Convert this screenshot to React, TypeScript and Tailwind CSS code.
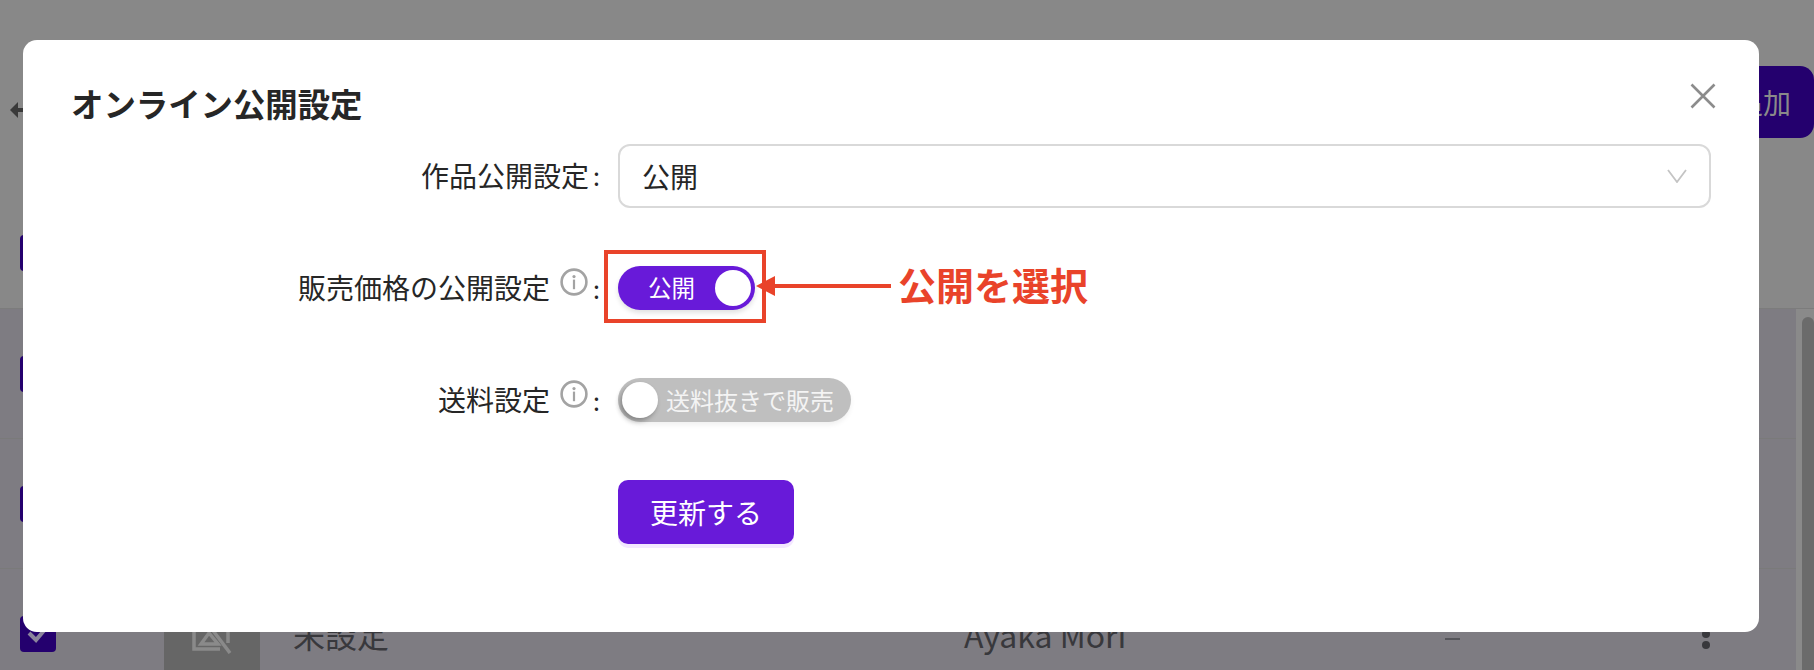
import React from "react";

const jp = "font-['Noto_Sans_CJK_JP','Noto_Sans',sans-serif]";

function InfoIcon() {
  return (
    <svg width="28" height="28" viewBox="0 0 28 28" fill="none" className="shrink-0">
      <circle cx="14" cy="14" r="12.4" stroke="#a3a3a3" strokeWidth="2.6" />
      <circle cx="14" cy="8.6" r="1.6" fill="#a3a3a3" />
      <rect x="12.9" y="11.6" width="2.2" height="9.6" fill="#a3a3a3" />
    </svg>
  );
}

function Label({ text, info }: { text: string; info?: boolean }) {
  return (
    <div className="flex w-[575px] shrink-0 items-center justify-end">
      <span className="-mt-[2px] text-[28px] leading-[36px] text-[#262626]">{text}</span>
      {info && (
        <span className="ml-[10px] mr-[1px] -mt-[12px]">
          <InfoIcon />
        </span>
      )}
      <span className="-mt-[1px] ml-[4px] w-[5px] text-[25px] leading-[36px] text-[#262626]">:</span>
    </div>
  );
}

function Checkbox({ checked }: { checked?: boolean }) {
  return (
    <div className="ml-[20px] flex h-[36px] w-[36px] shrink-0 items-center justify-center rounded-[4px] bg-[#24006e]">
      {checked && (
        <svg width="24" height="20" viewBox="0 0 24 20" fill="none">
          <path d="M3 9l7 7L21 3" stroke="#8b849c" strokeWidth="4" />
        </svg>
      )}
    </div>
  );
}

export default function App() {
  return (
    <div className={`relative h-[670px] w-[1814px] overflow-hidden bg-[#888888] ${jp}`}>
      {/* page beneath the overlay */}
      <div className="h-[309px] border-b border-[#7c7c7c] pt-[66px]">
        <div className="flex h-[72px] items-center justify-between">
          <svg width="24" height="20" viewBox="0 0 24 20" className="ml-[10px] mt-[12px] translate-y-[3px]" fill="none">
            <path d="M0 9l8-8v6h14v4H8v6z" fill="#3a3a3a" />
          </svg>
          <div className="flex h-[72px] w-[200px] items-center justify-end rounded-[14px] bg-[#24006e] pr-[23px] text-[28px] text-[#8a8a8a]">
            追加
          </div>
        </div>
        <div className="mt-[97px]">
          <Checkbox />
        </div>
      </div>
      <div className="flex">
        <div className="flex-1 bg-[#7e7c82]">
          <div className="flex h-[130px] items-center border-b border-[#7a7a7a]">
            <Checkbox />
          </div>
          <div className="flex h-[130px] items-center border-b border-[#7a7a7a]">
            <Checkbox />
          </div>
          <div className="flex h-[130px] items-center text-[#38383c]">
            <Checkbox checked />
            <div className="ml-[108px] flex h-[96px] w-[96px] items-center justify-center bg-[#666666]">
              <svg width="40" height="40" viewBox="0 0 40 40" fill="none" stroke="#8a8a8a" strokeWidth="3.5">
                <path d="M2 2v33h26M36 2v27" />
                <path d="M10 2l28 37" />
                <path d="M9 30l8-11 9 11z" />
              </svg>
            </div>
            <div className="ml-[33px] w-[671px] text-[32px]">未設定</div>
            <div className="w-[481px] text-[32px]">Ayaka Mori</div>
            <div className="mt-[10px] h-[2px] w-[15px] bg-[#55555a]" />
            <div className="ml-[242px] flex flex-col gap-[3px]">
              <span className="h-[8px] w-[8px] rounded-full bg-[#38383c]" />
              <span className="h-[8px] w-[8px] rounded-full bg-[#38383c]" />
              <span className="h-[8px] w-[8px] rounded-full bg-[#38383c]" />
            </div>
          </div>
        </div>
        <div className="w-[18px] bg-[#8a8a8a] pl-[6px] pt-[8px]">
          <div className="h-[400px] w-[12px] rounded-t-[6px] bg-[#6b6b6b]" />
        </div>
      </div>

      {/* modal */}
      <div className="absolute left-[23px] top-[40px] h-[592px] w-[1736px] rounded-[14px] bg-white pt-[41px]">
        <h2 className="pl-[48px] text-[32.4px] font-bold leading-[44px] text-[#262626]">オンライン公開設定</h2>

        <svg width="26" height="26" viewBox="0 0 26 26" className="absolute left-[1667px] top-[43px]" fill="none">
          <path d="M1.5 1.5l23 23M24.5 1.5l-23 23" stroke="#8c8c8c" strokeWidth="2.6" />
        </svg>

        <div className="mt-[19px] flex flex-col">
          <div className="flex h-[63px] items-center gap-[20px]">
            <Label text="作品公開設定" />
            <div className="flex h-[64px] w-[1093px] items-center justify-between rounded-[12px] border-2 border-[#d9d9d9] pl-[22px] pr-[22px] text-[28px] text-[#262626]">
              <span>公開</span>
              <svg width="20" height="14" viewBox="0 0 20 14" fill="none">
                <path d="M1 1l9 12 9-12" stroke="#c4c4c4" strokeWidth="1.8" />
              </svg>
            </div>
          </div>

          <div className="mt-[59px] flex h-[44px] items-center gap-[20px]">
            <Label text="販売価格の公開設定" info />
            <div className="flex h-[44px] w-[137px] items-center justify-between rounded-full bg-[#681ad9] pl-[30px] pr-[4px] shadow-[0_3px_5px_rgba(0,0,0,0.12)]">
              <span className="text-[23.5px] text-white">公開</span>
              <span className="h-[36px] w-[36px] rounded-full bg-white" />
            </div>
          </div>

          <div className="mt-[68px] flex h-[44px] items-center gap-[20px]">
            <Label text="送料設定" info />
            <div className="flex h-[44px] w-[233px] items-center rounded-full bg-[#bfbfbf] pl-[4px] shadow-[0_3px_5px_rgba(0,0,0,0.06)]">
              <span className="h-[36px] w-[36px] rounded-full bg-white shadow-[-2px_3px_5px_rgba(0,0,0,0.3)]" />
              <span className="ml-[8px] whitespace-nowrap text-[24px] text-[#f4f4f4]">送料抜きで販売</span>
            </div>
          </div>

          <div className="mt-[58px] pl-[595px]">
            <button className="h-[64px] w-[176px] rounded-[10px] bg-[#681ad9] text-[28px] text-white shadow-[0_4px_0_#f3e8ff]">
              更新する
            </button>
          </div>
        </div>

        {/* annotation */}
        <div className="absolute left-[581px] top-[210px] h-[73px] w-[162px] border-4 border-[#e9432a]" />
        <svg width="135" height="22" viewBox="0 0 135 22" className="absolute left-[733px] top-[235px]" fill="none">
          <path d="M0 11L19 1v8h116v4H19v8z" fill="#e9432a" />
        </svg>
        <span className="absolute left-[875px] top-[220px] text-[38px] font-bold leading-[48px] text-[#e9432a]">公開を選択</span>
      </div>
    </div>
  );
}
